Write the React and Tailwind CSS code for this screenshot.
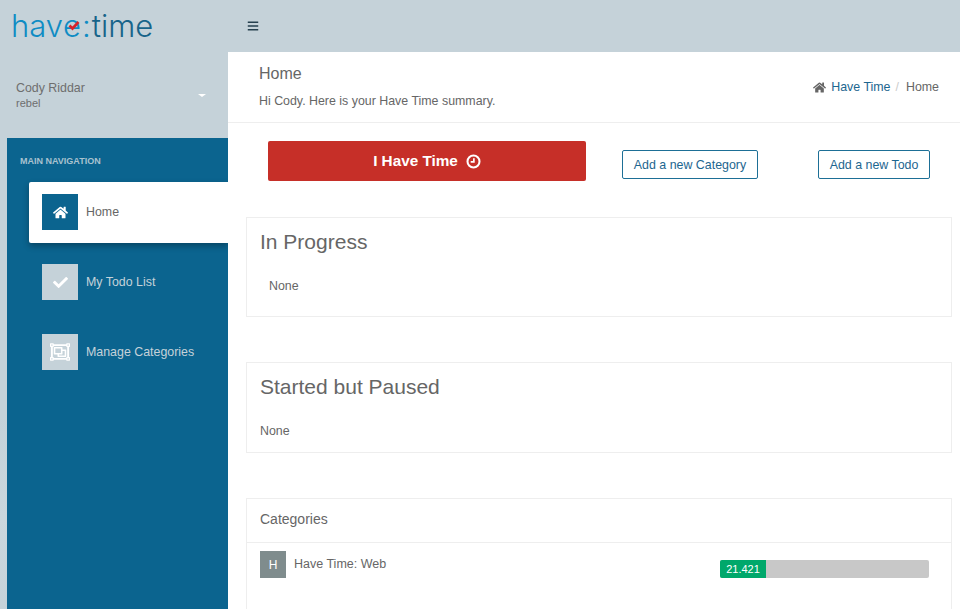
import { FaBars, FaCheck, FaHome, FaRegObjectGroup } from "react-icons/fa";

function ClockIcon() {
  return (
    <svg width="15" height="15" viewBox="0 0 16 16" fill="none" stroke="currentColor">
      <circle cx="8" cy="8" r="6.4" strokeWidth="2.2" />
      <path d="M8.4 4.4v4H5" strokeWidth="1.8" />
    </svg>
  );
}

function Logo() {
  return (
    <div className="flex items-baseline font-['Inter',sans-serif] text-[31px] leading-[34px] font-light">
      <span className="text-[#0f8cc4]">hav</span>
      <span className="relative text-[#0f8cc4]">
        e
        <svg className="absolute left-[5px] top-[12px]" width="12" height="10" viewBox="0 0 12 10" fill="none">
          <path d="M1.5 4.5l3 3 6-6.5" stroke="#d8232a" strokeWidth="2.6" />
        </svg>
      </span>
      <span className="mx-px text-[#0f8cc4]">:</span>
      <span className="text-[#17648a]">time</span>
    </div>
  );
}

function NavItem({ icon, label, active }) {
  return (
    <div
      className={`flex h-[61px] items-center gap-2 pb-px pl-[13px] ${
        active ? "rounded-l-xs bg-white text-[#666] shadow-[0_3px_6px_rgba(0,0,0,0.3)]" : "text-[#c5d2d9]"
      }`}
    >
      <div
        className={`flex h-9 w-9 items-center justify-center text-white ${
          active ? "bg-[#0b648f]" : "bg-[#c5d2d9]"
        }`}
      >
        {icon}
      </div>
      <span className="text-[12.4px]">{label}</span>
    </div>
  );
}

function Sidebar() {
  return (
    <aside className="flex w-[228px] shrink-0 flex-col bg-[linear-gradient(160deg,#c5d2d9_60%,#cbd7dd_75%,#c5d2d9_90%)]">
      <div className="flex h-[52px] items-center pl-[11px]">
        <Logo />
      </div>
      <div className="flex h-[86px] items-center justify-between pl-4 pr-[22px]">
        <div className="text-[#6e6e6e]">
          <div className="text-[12.4px] leading-[17px]">Cody Riddar</div>
          <div className="text-[11px] leading-[13px]">rebel</div>
        </div>
        <div className="h-0 w-0 border-x-[4px] border-t-[3px] border-x-transparent border-t-white" />
      </div>
      <nav className="ml-[7px] flex-1 bg-[#0b648f] pl-[22px]">
        <div className="-ml-[9px] flex h-[44px] items-center pt-[4px] text-[9px] font-bold text-[#a9c2cf] uppercase">
          Main Navigation
        </div>
        <div className="flex flex-col gap-[9px]">
          <NavItem active label="Home" icon={<FaHome size={15} />} />
          <NavItem label="My Todo List" icon={<FaCheck size={15} />} />
          <NavItem label="Manage Categories" icon={<FaRegObjectGroup size={20} />} />
        </div>
      </nav>
    </aside>
  );
}

function PageHeader() {
  return (
    <div className="flex h-[71px] items-center justify-between border-b border-[#eeeeee] pl-[31px] pr-[21px]">
      <div>
        <h1 className="-mt-px text-base leading-5 text-[#666]">Home</h1>
        <p className="mt-[9px] text-[12.4px] leading-4 text-[#666]">Hi Cody. Here is your Have Time summary.</p>
      </div>
      <div className="flex items-center pt-px text-[12.4px] text-[#666]">
        <FaHome size={13} className="mr-[5px]" />
        <span className="text-[#1d668f]">Have Time</span>
        <span className="ml-[5px] mr-[7px] text-[#ccc]">/</span>
        <span>Home</span>
      </div>
    </div>
  );
}

function ActionBar() {
  return (
    <div className="flex h-[77px] items-start pl-10">
      <button className="mt-[18px] flex h-10 w-[318px] items-center justify-center gap-2 rounded-xs bg-[#c62f28] text-[15.3px] font-bold text-white">
        I Have Time <ClockIcon />
      </button>
      <button className="mt-[27px] ml-9 h-[29px] w-[136px] rounded-xs border border-[#1d6f96] pt-px text-[12.4px] text-[#1d668f]">
        Add a new Category
      </button>
      <button className="mt-[27px] ml-[60px] h-[29px] w-[112px] rounded-xs border border-[#1d6f96] pt-px text-[12.4px] text-[#1d668f]">
        Add a new Todo
      </button>
    </div>
  );
}

function Card({ title, height, noneInset }) {
  return (
    <section className={`${height} border border-[#eeeeee] px-[13px] pt-[10px]`}>
      <h2 className="text-[21px] leading-7 text-[#666]">{title}</h2>
      <p className={`${noneInset} mt-[22px] text-[12.4px] leading-4 text-[#666]`}>None</p>
    </section>
  );
}

export default function App() {
  return (
    <div className="flex h-[609px] w-[960px] overflow-hidden font-['Liberation_Sans',Arial,sans-serif]">
      <Sidebar />
      <div className="flex min-w-0 flex-1 flex-col">
        <header className="flex h-[52px] shrink-0 items-center bg-[#c5d2d9] pl-[19px] text-[#26404f]">
          <FaBars size={12} />
        </header>
        <main className="flex-1 overflow-hidden bg-white">
          <PageHeader />
          <ActionBar />
          <div className="mt-[17px] flex flex-col pl-[18px] pr-2">
            <Card title="In Progress" height="h-[100px]" noneInset="ml-[9px]" />
            <div className="mt-[45px]">
              <Card title="Started but Paused" height="h-[91px]" noneInset="" />
            </div>
            <section className="mt-[45px] h-[120px] border border-[#eeeeee]">
              <div className="flex h-[44px] items-center border-b border-[#eeeeee] px-[13px] pb-[3px] text-sm text-[#666]">
                Categories
              </div>
              <div className="flex items-start px-[13px] pt-2">
                <div className="flex h-[27px] w-[26px] items-center justify-center bg-[#7f8c8d] text-xs text-white">
                  H
                </div>
                <span className="ml-2 text-[12.5px] leading-[27px] text-[#666]">Have Time: Web</span>
                <div className="mt-[9px] ml-auto mr-[9px] flex h-[18px] w-[209px] rounded-xs bg-[#c8c8c8]">
                  <div className="flex w-[46px] items-center justify-center rounded-l-xs bg-[#00a86b] text-[11px] text-white">
                    21.421
                  </div>
                </div>
              </div>
            </section>
          </div>
        </main>
      </div>
    </div>
  );
}
